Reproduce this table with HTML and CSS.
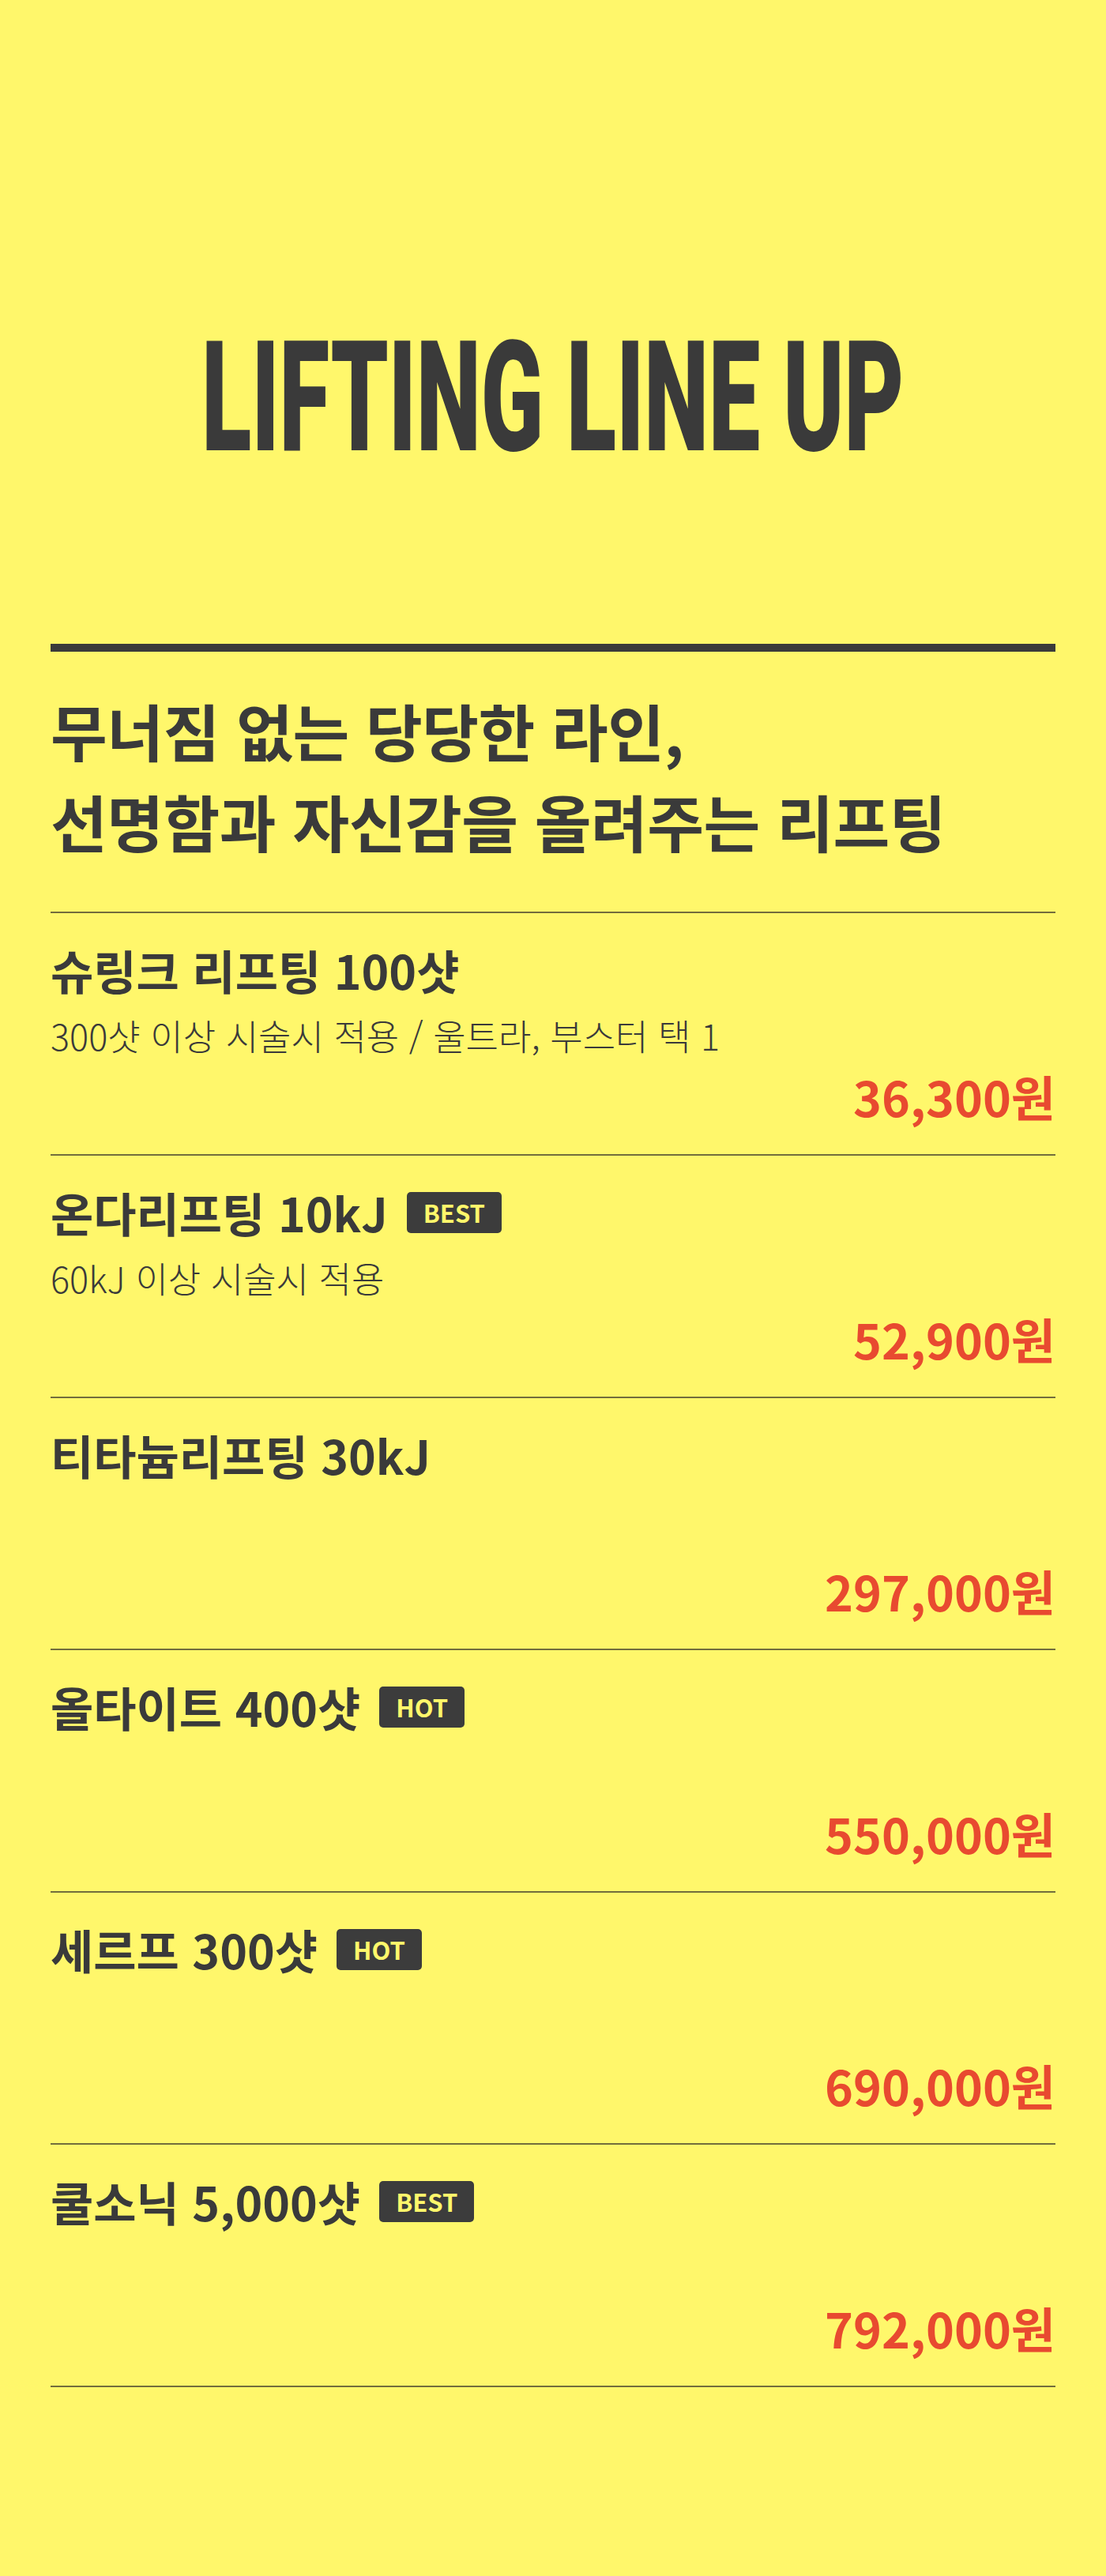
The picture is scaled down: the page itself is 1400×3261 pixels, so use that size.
FILE: index.html
```html
<!DOCTYPE html>
<html lang="ko">
<head>
    <meta charset="UTF-8">
    <meta name="viewport" content="width=device-width, initial-scale=1.0">
    <title>Lifting Line Up</title>
    <link rel="stylesheet" href="styles.css">
</head>
<body>
    <main class="lineup">
        <h1 class="lineup-title"><span>LIFTING LINE UP</span></h1>

        <div class="lineup-intro">
            <p>무너짐 없는 당당한 라인,<br>선명함과 자신감을 올려주는 리프팅</p>
        </div>

        <ul class="price-list">
            <li class="price-item">
                <h2 class="price-name">슈링크 리프팅 100샷</h2>
                <p class="price-note">300샷 이상 시술시 적용 / 울트라, 부스터 택 1</p>
                <div class="price-value">36,300원</div>
            </li>
            <li class="price-item">
                <h2 class="price-name">온다리프팅 10kJ <span class="badge">BEST</span></h2>
                <p class="price-note">60kJ 이상 시술시 적용</p>
                <div class="price-value">52,900원</div>
            </li>
            <li class="price-item tall">
                <h2 class="price-name">티타늄리프팅 30kJ</h2>
                <p class="price-note"></p>
                <div class="price-value">297,000원</div>
            </li>
            <li class="price-item">
                <h2 class="price-name">올타이트 400샷 <span class="badge">HOT</span></h2>
                <p class="price-note"></p>
                <div class="price-value">550,000원</div>
            </li>
            <li class="price-item tall">
                <h2 class="price-name">세르프 300샷 <span class="badge">HOT</span></h2>
                <p class="price-note"></p>
                <div class="price-value">690,000원</div>
            </li>
            <li class="price-item">
                <h2 class="price-name">쿨소닉 5,000샷 <span class="badge">BEST</span></h2>
                <p class="price-note"></p>
                <div class="price-value">792,000원</div>
            </li>
        </ul>
    </main>
</body>
</html>
```

FILE: styles.css
```css
body {
    margin: 0;
    background-color: #fff76b;
    color: #3a3a3a;
    font-family: "Noto Sans CJK KR", "Noto Sans", sans-serif;
}

.lineup {
    padding: 0 64px 200px;
}

.lineup-title {
    margin: 0;
    padding-top: 407px;
    display: flex;
    justify-content: center;
    font-family: Roboto, "Liberation Sans", sans-serif;
    font-weight: 900;
    font-size: 194px;
    line-height: 1;
    white-space: nowrap;
}

.lineup-title span {
    display: inline-block;
    transform: scaleX(0.6);
}

.lineup-intro {
    margin-top: 214px;
    border-top: 10px solid #3a3a3a;
    padding: 42px 0 57px;
}

.lineup-intro p {
    margin: 0;
    font-size: 78px;
    font-weight: 700;
    line-height: 115px;
    letter-spacing: -0.5px;
}

.price-list {
    list-style: none;
    margin: 0;
    padding: 0;
    border-bottom: 2px solid #726d3c;
}

.price-item {
    border-top: 2px solid #726d3c;
    padding: 37px 0 38px;
}

.price-name {
    display: flex;
    align-items: center;
    margin: 0;
    font-size: 59px;
    font-weight: 700;
    line-height: 70px;
}

.badge {
    margin-left: 24px;
    height: 52px;
    padding: 0 21px;
    border-radius: 5px;
    background-color: #3c3c3c;
    color: #fff76b;
    font-size: 31px;
    line-height: 52px;
}

.price-note {
    margin: 18px 0 0;
    min-height: 60px;
    font-size: 45px;
    font-weight: 300;
    line-height: 60px;
}

.tall .price-note {
    min-height: 72px;
}

.price-value {
    margin-top: 12px;
    text-align: right;
    color: #e84a30;
    font-size: 61px;
    font-weight: 700;
    line-height: 70px;
}
```
